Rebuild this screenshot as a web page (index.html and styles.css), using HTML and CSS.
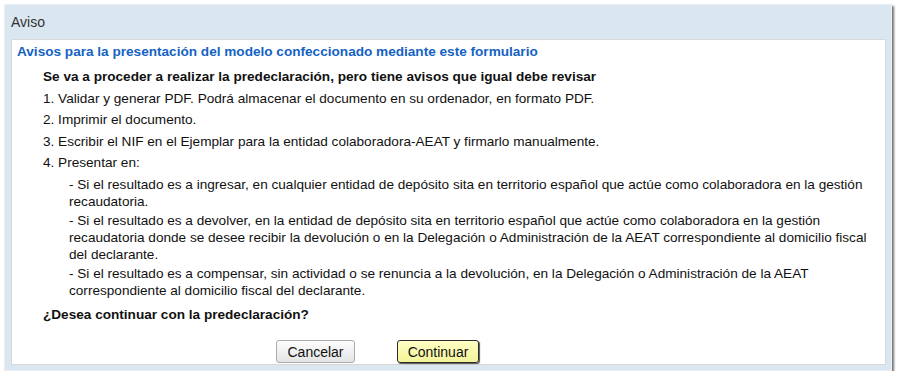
FILE: index.html
```html
<!DOCTYPE html>
<html lang="es">
<head>
    <meta charset="UTF-8">
    <meta name="viewport" content="width=device-width, initial-scale=1.0">
    <title>Aviso</title>
    <link rel="stylesheet" href="styles.css">
</head>
<body>

    <div class="dialog">
        <div class="dialog-title">Aviso</div>
        <div class="dialog-body">
            <h2 class="aviso-titulo">Avisos para la presentación del modelo confeccionado mediante este formulario</h2>

            <div class="aviso-contenido">
                <p class="destacado">Se va a proceder a realizar la predeclaración, pero tiene avisos que igual debe revisar</p>
                <p>1. Validar y generar PDF. Podrá almacenar el documento en su ordenador, en formato PDF.</p>
                <p>2. Imprimir el documento.</p>
                <p>3. Escribir el NIF en el Ejemplar para la entidad colaboradora-AEAT y firmarlo manualmente.</p>
                <p>4. Presentar en:</p>

                <div class="sub">
                    <p>- Si el resultado es a ingresar, en cualquier entidad de depósito sita en territorio español que actúe como colaboradora en la gestión recaudatoria.</p>
                    <p>- Si el resultado es a devolver, en la entidad de depósito sita en territorio español que actúe como colaboradora en la gestión recaudatoria donde se desee recibir la devolución o en la Delegación o Administración de la AEAT correspondiente al domicilio fiscal del declarante.</p>
                    <p>- Si el resultado es a compensar, sin actividad o se renuncia a la devolución, en la Delegación o Administración de la AEAT correspondiente al domicilio fiscal del declarante.</p>
                </div>

                <p class="destacado pregunta">¿Desea continuar con la predeclaración?</p>
            </div>

            <div class="botones">
                <button class="boton">Cancelar</button>
                <button class="boton principal">Continuar</button>
            </div>
        </div>
    </div>

</body>
</html>
```

FILE: styles.css
```css
body {
    margin: 0;
    font-family: "Liberation Sans", Arial, sans-serif;
    font-size: 13.6px;
    color: #111;
    background: #fff;
}

.dialog {
    width: 875px;
    margin: 4px 0 0 4px;
    padding: 0 5px 5px 6px;
    background-color: #dae6f0;
    border: 1px solid #e9eff4;
    box-shadow: 2px 2px 2px rgba(0, 0, 0, 0.55);
}

.dialog-title {
    height: 34px;
    line-height: 34px;
    padding-left: 0;
    font-size: 14px;
    color: #333;
}

.dialog-body {
    background: #fff;
    border: 1px solid #d8d8d8;
    padding: 3px 0 0 5px;
}

.aviso-titulo {
    margin: 0;
    font-size: 13.6px;
    line-height: 17px;
    color: #1463c4;
}

.aviso-contenido {
    margin: 8px 0 0 26px;
}

.aviso-contenido p {
    margin: 0 0 3.5px 0;
    line-height: 18px;
}

.destacado {
    font-weight: bold;
}

.sub {
    margin-left: 26px;
}

.sub p {
    line-height: 17px;
    margin-bottom: 2px;
}

.aviso-contenido .pregunta {
    margin-top: 7px;
}

.botones {
    padding: 13px 0 1px 259px;
    display: flex;
    gap: 42px;
}

.boton {
    height: 23px;
    width: 79px;
    padding: 0;
    font-family: "Liberation Sans", Arial, sans-serif;
    font-size: 14px;
    color: #111;
    background: linear-gradient(#fdfdfd, #e4e4e4);
    border: 1px solid #aaa;
    border-radius: 3px;
    cursor: pointer;
}

.boton.principal {
    width: 82px;
    background: linear-gradient(#ffffc4, #f3f39a);
    border: 1px solid #2a2a2a;
    box-shadow: 1px 1px 1px #555;
}
```
